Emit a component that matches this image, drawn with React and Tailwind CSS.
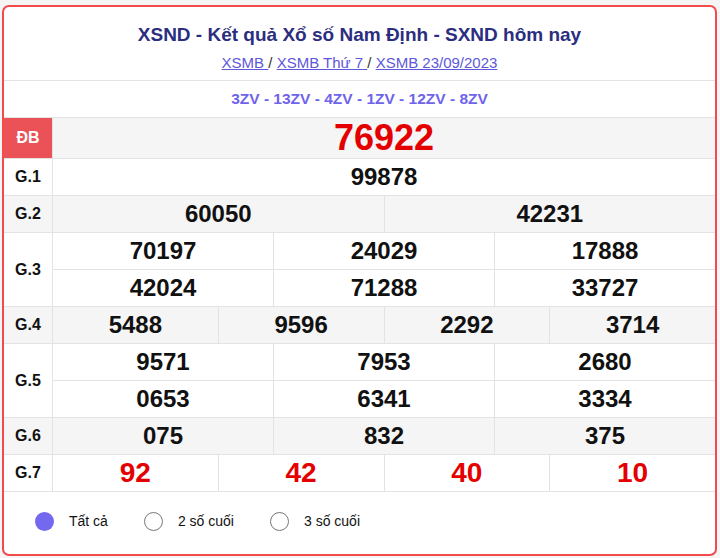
import React from "react";

const rowLine = "border-t border-[#e3e3e3]";

const Cell = ({ children, first, className = "" }) => (
  <div
    className={`flex-1 flex items-center justify-center ${first ? "" : "border-l border-[#e3e3e3]"} ${className}`}
  >
    {children}
  </div>
);

const SubRow = ({ items, first, red }) => (
  <div className={`flex h-[36px] ${first ? "" : "border-t border-[#e3e3e3] h-[37px]"}`}>
    {items.map((n, i) => (
      <Cell key={i} first={i === 0}>
        <span
          className={
            red
              ? "text-[28px] font-bold text-[#e40000]"
              : "text-[24px] font-bold text-[#111]"
          }
        >
          {n}
        </span>
      </Cell>
    ))}
  </div>
);

const PrizeRow = ({ label, rows, gray, red }) => (
  <div className={`flex ${rowLine} ${gray ? "bg-[#f5f5f5]" : "bg-white"}`}>
    <div className="w-[48px] flex items-center justify-center text-[16px] font-bold text-[#111]">
      {label}
    </div>
    <div className="flex-1 flex flex-col border-l border-[#e3e3e3]">
      {rows.map((items, i) => (
        <SubRow key={i} items={items} first={i === 0} red={red} />
      ))}
    </div>
  </div>
);

const Radio = ({ checked, label }) => (
  <label className="flex items-center gap-[15px] cursor-pointer">
    {checked ? (
      <span className="w-[19px] h-[19px] rounded-full bg-[#7468ee]" />
    ) : (
      <span className="w-[19px] h-[19px] rounded-full border-[1.5px] border-[#767676] bg-white" />
    )}
    <span className="text-[14px] text-[#111]">{label}</span>
  </label>
);

const App = () => {
  return (
    <div
      className="min-h-screen bg-[#f5f5f5] pt-[5px] pl-[2px] pr-[3px] pb-[3px]"
      style={{ fontFamily: '"Liberation Sans", Arial, sans-serif' }}
    >
      <div className="bg-white border-2 border-[#f24a4d] rounded-[7px] overflow-hidden">
        {/* Judul */}
        <div className="pt-[16px] pb-[7px] text-center">
          <h1 className="text-[19px] leading-[24px] font-bold text-[#2b2e80]">
            XSND - Kết quả Xổ số Nam Định - SXND hôm nay
          </h1>
          <div className="mt-[6px] text-[15px] leading-[20px] text-[#333]">
            <a href="#" className="text-[#5d57da] underline">XSMB </a>
            {" / "}
            <a href="#" className="text-[#5d57da] underline">XSMB Thứ 7 </a>
            {" / "}
            <a href="#" className="text-[#5d57da] underline">XSMB 23/09/2023</a>
          </div>
        </div>

        <div className="h-[37px] border-t border-[#e3e3e3] flex items-center justify-center text-[15.5px] font-bold text-[#6e63ea]">
          3ZV - 13ZV - 4ZV - 1ZV - 12ZV - 8ZV
        </div>

        {/* Tabel hasil */}
        <div className="border-b border-[#e3e3e3]">
          <div className={`flex h-[41px] ${rowLine} bg-[#f5f5f5]`}>
            <div className="w-[48px] flex items-center justify-center bg-[#ea5257] text-white text-[16px] font-bold">
              ĐB
            </div>
            <div className="flex-1 flex items-center justify-center border-l border-[#e3e3e3]">
              <span className="text-[36px] font-bold text-[#e40000]">76922</span>
            </div>
          </div>
          <PrizeRow label="G.1" rows={[["99878"]]} />
          <PrizeRow label="G.2" rows={[["60050", "42231"]]} gray />
          <PrizeRow
            label="G.3"
            rows={[
              ["70197", "24029", "17888"],
              ["42024", "71288", "33727"],
            ]}
          />
          <PrizeRow label="G.4" rows={[["5488", "9596", "2292", "3714"]]} gray />
          <PrizeRow
            label="G.5"
            rows={[
              ["9571", "7953", "2680"],
              ["0653", "6341", "3334"],
            ]}
          />
          <PrizeRow label="G.6" rows={[["075", "832", "375"]]} gray />
          <PrizeRow label="G.7" rows={[["92", "42", "40", "10"]]} red />
        </div>

        {/* Pilihan tampilan */}
        <div className="flex items-center gap-[36px] pl-[31px] pt-[19px] pb-[22px]">
          <Radio checked label="Tất cả" />
          <Radio label="2 số cuối" />
          <Radio label="3 số cuối" />
        </div>
      </div>
    </div>
  );
};

export default App;
